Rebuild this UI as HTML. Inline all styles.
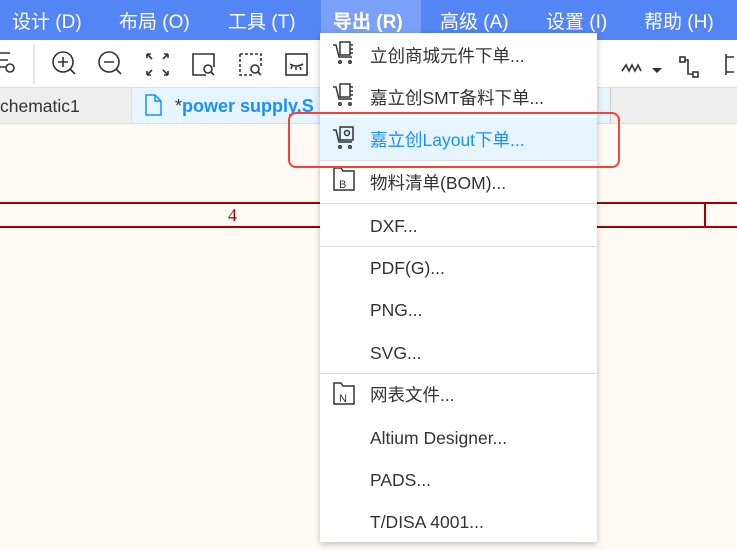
<!DOCTYPE html><html><head><meta charset="utf-8"><style>
*{margin:0;padding:0;box-sizing:border-box}
body{width:737px;height:550px;overflow:hidden;position:relative;background:#fffaf4;font-family:"Liberation Sans","Noto Sans CJK SC",sans-serif}
.mb{position:absolute;left:0;top:0;width:737px;height:40px;background:#5485f4;color:#fff;font-size:19px}
.mb span{position:absolute;top:7px}
.tb{position:absolute;top:40px;left:0;width:737px;height:48px;background:#fff;border-bottom:1px solid #ddd}
.tabs{position:absolute;top:88px;left:0;width:737px;height:36px;background:#eee;border-bottom:1px solid #ddd}
.menu{position:absolute;left:320px;top:33px;width:277px;height:509px;background:#fff;box-shadow:0 2px 6px rgba(0,0,0,.25);font-size:17.5px;color:#333}
.it{position:absolute;left:0;width:277px;height:42px;line-height:44px;padding-left:50px}
.sep{position:absolute;left:0;width:277px;height:1px;background:#ddd}
svg{position:absolute}
</style></head><body>
<div class="mb">
<span style="left:12px">设计 (D)</span><span style="left:119px">布局 (O)</span><span style="left:228px">工具 (T)</span>
<div style="position:absolute;left:321px;top:0;width:100px;height:33px;background:#7aa1f7"></div>
<span style="left:333px;font-weight:bold">导出 (R)</span><span style="left:440px">高级 (A)</span><span style="left:546px">设置 (I)</span><span style="left:644px">帮助 (H)</span>
</div>
<div class="tb">
<svg width="737" height="48" fill="none" stroke="#333" stroke-width="1.6">
<path d="M0 13h10M0 20h8M0 27h6"/><circle cx="10" cy="28" r="4"/>
<line x1="34" y1="4" x2="34" y2="44" stroke="#ddd"/>
<circle cx="63" cy="22" r="10"/><path d="M58 22h10M63 17v10M70 29l5 5"/>
<circle cx="109" cy="22" r="10"/><path d="M104 22h10M116 29l5 5"/>
<path d="M147 14l5 5M147 14v4M147 14h4M168 14l-5 5M168 14v4M168 14h-4M147 35l5-5M147 35v-4M147 35h4M168 35l-5-5M168 35v-4M168 35h-4"/>
<path d="M206 35h-13v-21h21v13"/><circle cx="208" cy="29" r="4"/><path d="M211 32l3 3"/>
<path d="M240 14h21v13M240 14v21h13" stroke-dasharray="3 2"/><circle cx="255" cy="29" r="4"/><path d="M258 32l3 3"/>
<rect x="286" y="14" width="21" height="21"/><path d="M290 24q6 4 13 0M292 26l-1 3M296 27v3M300 27l1 3"/>
<path d="M622 31l4-6 3 6 3-6 3 6 3-6 3 6" /><path d="M652 28h10l-5 5z" fill="#333" stroke="none"/>
<rect x="680" y="17" width="5" height="5"/><rect x="693" y="32" width="5" height="5"/><path d="M685 20h3v14h5"/>
<path d="M726 14v21M726 17h8M726 32h8"/>
</svg></div>
<div class="tabs">
<div style="position:absolute;left:0;top:0;width:131px;height:35px;line-height:36px;font-size:17.5px;color:#333">chematic1</div>
<div style="position:absolute;left:131px;top:0;width:480px;height:35px;background:#e6f4fd;border-left:1px solid #ddd;border-right:1px solid #ccc"></div>
<svg width="30" height="30" style="left:143px;top:5px" fill="none" stroke="#1890ff" stroke-width="1.5"><path d="M3 2h9l6 6v14H3z M12 2v6h6"/></svg>
<div style="position:absolute;left:175px;top:0;height:35px;line-height:36px;font-size:18px;color:#1890ff;font-weight:bold"><span style="color:#333;font-weight:normal">*</span>power supply.S</div>
</div>
<div style="position:absolute;left:0;top:202px;width:737px;height:2px;background:#a30000"></div>
<div style="position:absolute;left:0;top:226px;width:737px;height:2px;background:#a30000"></div>
<div style="position:absolute;left:704px;top:202px;width:2px;height:26px;background:#a30000"></div>
<div style="position:absolute;left:228px;top:205px;font-family:'Liberation Serif',serif;font-size:18px;color:#a30000">4</div>
<div class="menu">
<div class="it" style="top:1px">立创商城元件下单...</div>
<div class="it" style="top:43px">嘉立创SMT备料下单...</div>
<div class="it" style="top:85px;background:#e6f4fd;color:#1890ff;height:42px">嘉立创Layout下单...</div>
<div class="sep" style="top:127px"></div>
<div class="it" style="top:128px">物料清单(BOM)...</div>
<div class="sep" style="top:170px"></div>
<div class="it" style="top:171px">DXF...</div>
<div class="sep" style="top:213px"></div>
<div class="it" style="top:213px">PDF(G)...</div>
<div class="it" style="top:255px">PNG...</div>
<div class="it" style="top:298px">SVG...</div>
<div class="sep" style="top:340px"></div>
<div class="it" style="top:340px">网表文件...</div>
<div class="it" style="top:383px">Altium Designer...</div>
<div class="it" style="top:425px">PADS...</div>
<div class="it" style="top:467px">T/DISA 4001...</div>
<svg width="277" height="509" fill="none" stroke="#333" stroke-width="1.5">
<g><path d="M13 12h3l3 12h13"/><rect x="20" y="9" width="10" height="13"/><path d="M30 12h3M30 16h3M30 20h3"/><circle cx="20" cy="29" r="1.2"/><circle cx="30" cy="29" r="1.2"/></g>
<g transform="translate(0,42)"><path d="M13 12h3l3 12h13"/><rect x="20" y="9" width="10" height="13"/><path d="M30 12h3M30 16h3M30 20h3"/><circle cx="20" cy="29" r="1.2"/><circle cx="30" cy="29" r="1.2"/></g>
<g transform="translate(0,85)"><path d="M13 12h3l3 12h13"/><rect x="20" y="9" width="13" height="13"/><circle cx="27" cy="15" r="2.5"/><circle cx="20" cy="29" r="1.2"/><circle cx="30" cy="29" r="1.2"/></g>
<path d="M14 135h7l2 3h11v19h-20z"/><text x="19" y="155" font-size="11" fill="#333" stroke="none" font-family="Liberation Sans">B</text>
<path d="M14 350h7l2 3h11v18h-20z"/><text x="19" y="369" font-size="11" fill="#333" stroke="none" font-family="Liberation Sans">N</text>
</svg>
</div>
<div style="position:absolute;left:288px;top:112px;width:332px;height:56px;border:2px solid #f5413b;border-radius:8px"></div>
</body></html>
